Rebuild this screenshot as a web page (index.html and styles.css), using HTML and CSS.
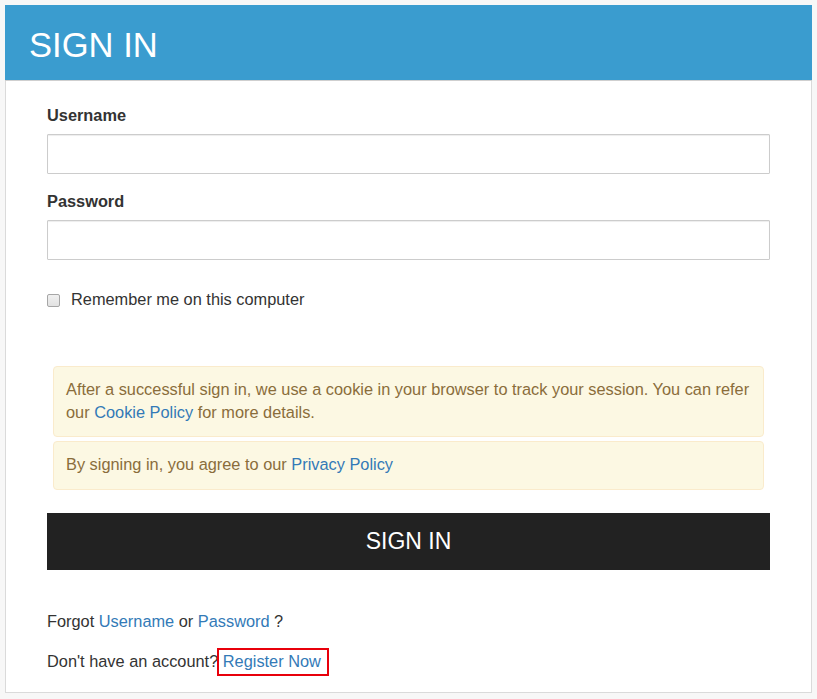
FILE: index.html
```html
<!DOCTYPE html>
<html lang="en">
<head>
<meta charset="utf-8">
<title>Sign In</title>
<link rel="stylesheet" href="styles.css">
</head>
<body>
<div class="card">
  <div class="card-header"><h1 class="card-title">SIGN IN</h1></div>
  <div class="card-body">
    <form class="signin-form">
      <label class="field-label" for="username">Username</label>
      <input class="field-input" id="username" type="text">
      <label class="field-label field-label-pw" for="password">Password</label>
      <input class="field-input" id="password" type="password">
      <label class="remember"><input class="remember-box" type="checkbox"><span>Remember me on this computer</span></label>
      <div class="notice notice-first">After a successful sign in, we use a cookie in your browser to track your session. You can refer our <a href="#" class="link">Cookie Policy</a> for more details.</div>
      <div class="notice notice-second">By signing in, you agree to our <a href="#" class="link">Privacy Policy</a></div>
      <button type="button" class="btn-signin">SIGN IN</button>
      <p class="help help-first">Forgot <a href="#" class="link">Username</a> or <a href="#" class="link">Password</a> ?</p>
      <p class="help help-second">Don't have an account? <a href="#" class="link register">Register Now</a></p>
    </form>
  </div>
</div>
</body>
</html>
```
FILE: styles.css
```css
html, body {
  margin: 0;
  padding: 0;
}
body {
  background: #f7f7f7;
  padding: 5px;
  font-family: "Liberation Sans", Arial, sans-serif;
  font-size: 16.35px;
  color: #333;
}
.card {
  width: 807px;
  background: #fff;
}
.card-header {
  background: #3a9ccf;
  height: 75px;
  border-bottom: 1px solid #cfcfcf;
  box-sizing: content-box;
}
.card-title {
  margin: 0;
  padding: 6px 0 0 24px;
  font-size: 34.6px;
  font-weight: normal;
  line-height: 69px;
  color: #fff;
}
.card-body {
  border: 1px solid #dadada;
  border-top: none;
  padding: 23px 41px 19px;
}
.signin-form {
  display: flex;
  flex-direction: column;
}
.field-label {
  display: block;
  font-weight: bold;
  line-height: 23px;
  margin-bottom: 7px;
}
.field-label-pw {
  margin-top: 16px;
}
.field-input {
  display: block;
  box-sizing: border-box;
  width: 100%;
  height: 40px;
  margin: 0;
  border: 1px solid #ccc;
  border-radius: 1px;
  box-shadow: inset 0 1px 1px rgba(0,0,0,0.075);
  background: #fff;
  font: inherit;
  padding: 6px 12px;
}
.remember {
  display: flex;
  align-items: center;
  margin-top: 28px;
  line-height: 23px;
}
.remember-box {
  -webkit-appearance: none;
  appearance: none;
  box-sizing: border-box;
  width: 13px;
  height: 13px;
  margin: 1px 11px 0 0;
  border: 1px solid #a6a6a6;
  border-radius: 2px;
  background: linear-gradient(#f0f0f0, #e2e2e2);
}
.notice {
  margin: 0 6px;
  padding: 11px 12px 13px;
  background: #fcf8e3;
  border: 1px solid #faebcc;
  border-radius: 4px;
  color: #8a6d3b;
  line-height: 22.5px;
}
.notice-first {
  margin-top: 55px;
}
.notice-second {
  margin-top: 4px;
}
.link {
  color: #337ab7;
  text-decoration: none;
}
.btn-signin {
  margin-top: 23.5px;
  height: 57px;
  width: 100%;
  border: none;
  background: #222;
  color: #fff;
  font-family: inherit;
  font-size: 23px;
  padding: 0;
  cursor: pointer;
}
.help {
  margin: 0;
  line-height: 23px;
}
.help-first {
  margin-top: 40px;
}
.help-second {
  margin-top: 17px;
}
.register {
  position: relative;
}
.register::after {
  content: "";
  position: absolute;
  left: -6px;
  right: -8px;
  top: -4px;
  bottom: -6px;
  border: 2px solid #e8000b;
}
```
